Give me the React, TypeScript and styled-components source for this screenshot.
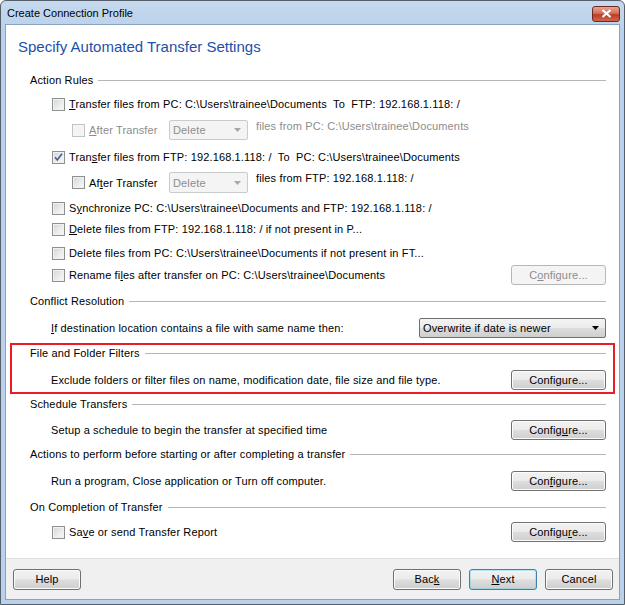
import React from "react";
import styled, { createGlobalStyle } from "styled-components";

const GlobalStyle = createGlobalStyle`
  html, body {
    margin: 0;
    padding: 0;
    background: #fff;
  }
  body {
    font-family: "Liberation Sans", Arial, sans-serif;
    font-size: 11px;
    letter-spacing: 0.14px;
    color: #000;
  }
`;

const Window = styled.div`
  width: 625px;
  height: 605px;
  box-sizing: border-box;
  display: flex;
  flex-direction: column;
  background: linear-gradient(#c6d9ef, #b9d1ea 30px, #b9d1ea);
  border: 1px solid #555e6b;
  border-radius: 6px 6px 0 0;
  padding: 0 4px 4px 4px;
`;

const TitleBar = styled.div`
  height: 23px;
  display: flex;
  align-items: center;
  justify-content: space-between;
  padding-left: 2px;
`;

const Title = styled.span`
  font-size: 11px;
  letter-spacing: 0;
  color: #000;
`;

const CloseButton = styled.div`
  width: 28px;
  height: 16px;
  margin-top: 2px;
  box-sizing: border-box;
  border: 1px solid #6c2b22;
  border-radius: 3px;
  background: linear-gradient(#e8a493, #d1705b 45%, #bf3c22 55%, #d0664c);
  display: flex;
  align-items: center;
  justify-content: center;
`;

const Panel = styled.div`
  flex: 1;
  display: flex;
  flex-direction: column;
  background: #fff;
  border: 1px solid #8ba2bf;
`;

const Content = styled.div`
  flex: 1;
  padding: 12px 13px 0 12px;
`;

const Heading = styled.h1`
  margin: 0;
  height: 20px;
  line-height: 20px;
  font-size: 15px;
  letter-spacing: 0;
  font-weight: normal;
  color: #1e4fa8;
`;

const Sections = styled.div`
  margin-left: 12px;
`;

const Row = styled.div<{ $mt: number; $indent?: number; $h?: number }>`
  display: flex;
  align-items: center;
  height: ${(p) => p.$h ?? 20}px;
  margin-top: ${(p) => p.$mt}px;
  padding-left: ${(p) => p.$indent ?? 0}px;
  white-space: pre;
`;

const HeaderLine = styled.span`
  flex: 1;
  height: 0;
  border-top: 1px solid #b5b5b5;
  margin-left: 5px;
`;

const Label = styled.span<{ $muted?: boolean; $w?: number }>`
  color: ${(p) => (p.$muted ? "#8d8d8d" : "#000")};
  ${(p) => (p.$w ? `width: ${p.$w}px; flex: none;` : "")}
`;

const SideNote = styled.span<{ $muted?: boolean }>`
  align-self: flex-start;
  margin-left: 8px;
  line-height: 13px;
  color: ${(p) => (p.$muted ? "#8d8d8d" : "#000")};
`;

const Key = styled.span`
  text-decoration: underline;
`;

const Check = styled.span<{ $disabled?: boolean }>`
  width: 13px;
  height: 13px;
  flex: none;
  box-sizing: border-box;
  margin-right: 4px;
  position: relative;
  border: 1px solid ${(p) => (p.$disabled ? "#c2c2c2" : "#8e8f8f")};
  background: ${(p) =>
    p.$disabled
      ? "#f4f4f4"
      : "linear-gradient(135deg, #d2d4d7, #eceded 60%, #f8f8f8)"};
  box-shadow: inset 0 0 0 1px ${(p) => (p.$disabled ? "#f7f7f7" : "#f1f1f1")};
  display: inline-flex;
  align-items: center;
  justify-content: center;
`;

const Select = styled.div<{ $w: number; $h?: number; $disabled?: boolean }>`
  width: ${(p) => p.$w}px;
  height: ${(p) => p.$h ?? 20}px;
  flex: none;
  box-sizing: border-box;
  display: flex;
  align-items: center;
  justify-content: space-between;
  padding: 0 6px 0 3px;
  border: 1px solid ${(p) => (p.$disabled ? "#c9cccf" : "#707070")};
  border-radius: 2px;
  background: ${(p) =>
    p.$disabled ? "#f4f4f4" : "linear-gradient(#f4f4f4, #ebebeb 50%, #dddddd 50%, #cfcfcf)"};
  color: ${(p) => (p.$disabled ? "#8d8d8d" : "#000")};
`;

const Button = styled.div<{ $w?: number; $disabled?: boolean; $default?: boolean }>`
  width: ${(p) => p.$w ?? 95}px;
  height: 20px;
  flex: none;
  box-sizing: border-box;
  margin-left: auto;
  display: flex;
  align-items: center;
  justify-content: center;
  border: 1px solid
    ${(p) => (p.$disabled ? "#b5b7b9" : p.$default ? "#3c7fb1" : "#707070")};
  border-radius: 3px;
  background: ${(p) =>
    p.$disabled
      ? "#f4f4f4"
      : "linear-gradient(#f2f2f2, #ebebeb 48%, #dddddd 52%, #cfcfcf)"};
  box-shadow: inset 0 0 0 1px
    ${(p) => (p.$disabled ? "#f4f4f4" : p.$default ? "#48d4fb55" : "#fcfcfc")};
  color: ${(p) => (p.$disabled ? "#8d8d8d" : "#000")};
`;

const Highlight = styled.div`
  margin: 5px -9px 0 -20px;
  padding: 0 7px 2px 18px;
  border: 2px solid #ec1c24;
`;

const Footer = styled.div`
  height: 41px;
  flex: none;
  box-sizing: border-box;
  display: flex;
  align-items: center;
  gap: 8px;
  padding: 0 6px 0 7px;
  background: #f0f0f0;
  border-top: 1px solid #dfdfdf;
`;

const FooterButton = styled(Button)`
  width: 68px;
  height: 21px;
  margin-left: 0;
`;

const Spacer = styled.div`
  flex: 1;
`;

const Arrow = ({ muted }: { muted?: boolean }) => (
  <svg width="7" height="4" viewBox="0 0 7 4">
    <path d="M0 0 H7 L3.5 4 Z" fill={muted ? "#a8a8a8" : "#000"} />
  </svg>
);

const Tick = () => (
  <svg width="11" height="11" viewBox="0 0 11 11" style={{ position: "absolute", left: 0, top: 0 }}>
    <path d="M2 5.2 L4.3 8 L9 1.8" fill="none" stroke="#4a5f97" strokeWidth="1.7" />
  </svg>
);

const SectionHeader = ({ mt, h, children }: { mt: number; h?: number; children: React.ReactNode }) => (
  <Row $mt={mt} $h={h}>
    <span>{children}</span>
    <HeaderLine />
  </Row>
);

export default function App() {
  return (
    <>
      <GlobalStyle />
      <Window>
        <TitleBar>
          <Title>Create Connection Profile</Title>
          <CloseButton>
            <svg width="11" height="9" viewBox="0 0 11 9">
              <path d="M1.5 1 L9.5 8 M9.5 1 L1.5 8" stroke="#fff" strokeWidth="2.2" />
            </svg>
          </CloseButton>
        </TitleBar>
        <Panel>
          <Content>
            <Heading>Specify Automated Transfer Settings</Heading>
            <Sections>
              <SectionHeader mt={13}>Action Rules</SectionHeader>
              <Row $mt={4} $indent={22}>
                <Check />
                <Label>
                  <Key>T</Key>ransfer files from PC: C:\Users\trainee\Documents  To  FTP: 192.168.1.118: /
                </Label>
              </Row>
              <Row $mt={6} $indent={42}>
                <Check $disabled />
                <Label $muted $w={80}>
                  <Key>A</Key>fter Transfer
                </Label>
                <Select $w={79} $disabled>
                  <span>Delete</span>
                  <Arrow muted />
                </Select>
                <SideNote $muted>files from PC: C:\Users\trainee\Documents</SideNote>
              </Row>
              <Row $mt={7} $indent={22}>
                <Check>
                  <Tick />
                </Check>
                <Label>
                  Tran<Key>s</Key>fer files from FTP: 192.168.1.118: /  To  PC: C:\Users\trainee\Documents
                </Label>
              </Row>
              <Row $mt={5} $indent={42} $h={21}>
                <Check />
                <Label $w={80}>
                  Af<Key>t</Key>er Transfer
                </Label>
                <Select $w={79} $h={21} $disabled>
                  <span>Delete</span>
                  <Arrow muted />
                </Select>
                <SideNote>files from FTP: 192.168.1.118: /</SideNote>
              </Row>
              <Row $mt={5} $indent={22}>
                <Check />
                <Label>
                  S<Key>y</Key>nchronize PC: C:\Users\trainee\Documents and FTP: 192.168.1.118: /
                </Label>
              </Row>
              <Row $mt={1} $indent={22}>
                <Check />
                <Label>
                  <Key>D</Key>elete files from FTP: 192.168.1.118: / if not present in P...
                </Label>
              </Row>
              <Row $mt={4} $indent={22}>
                <Check />
                <Label>Delete files from PC: C:\Users\trainee\Documents if not present in FT...</Label>
              </Row>
              <Row $mt={2} $indent={22}>
                <Check />
                <Label>
                  Rename fi<Key>l</Key>es after transfer on PC: C:\Users\trainee\Documents
                </Label>
                <Button $disabled>
                  C<Key>o</Key>nfigure...
                </Button>
              </Row>

              <SectionHeader mt={6}>Conflict Resolution</SectionHeader>
              <Row $mt={7} $indent={21}>
                <Label>
                  <Key>I</Key>f destination location contains a file with same name then:
                </Label>
                <Spacer />
                <Select $w={187}>
                  <span>Overwrite if date is newer</span>
                  <Arrow />
                </Select>
              </Row>

              <Highlight>
                <SectionHeader mt={0} h={16}>
                  File and Folder Filters
                </SectionHeader>
                <Row $mt={9} $indent={21}>
                  <Label>Exclude folders or filter files on name, modification date, file size and file type.</Label>
                  <Button>
                    Confi<Key>g</Key>ure...
                  </Button>
                </Row>
              </Highlight>

              <SectionHeader mt={0}>Schedule Transfers</SectionHeader>
              <Row $mt={6} $indent={21}>
                <Label>Setup a schedule to begin the transfer at specified time</Label>
                <Button>
                  Config<Key>u</Key>re...
                </Button>
              </Row>

              <SectionHeader mt={4}>Actions to perform before starting or after completing a transfer</SectionHeader>
              <Row $mt={7} $indent={21}>
                <Label>Run a program, Close application or Turn off computer.</Label>
                <Button>
                  Con<Key>f</Key>igure...
                </Button>
              </Row>

              <SectionHeader mt={6}>On Completion of Transfer</SectionHeader>
              <Row $mt={5} $indent={22}>
                <Check />
                <Label>
                  Sa<Key>v</Key>e or send Transfer Report
                </Label>
                <Button>
                  Configu<Key>r</Key>e...
                </Button>
              </Row>
            </Sections>
          </Content>
          <Footer>
            <FooterButton>Help</FooterButton>
            <Spacer />
            <FooterButton>
              Bac<Key>k</Key>
            </FooterButton>
            <FooterButton $default>
              <Key>N</Key>ext
            </FooterButton>
            <FooterButton>Cancel</FooterButton>
          </Footer>
        </Panel>
      </Window>
    </>
  );
}
